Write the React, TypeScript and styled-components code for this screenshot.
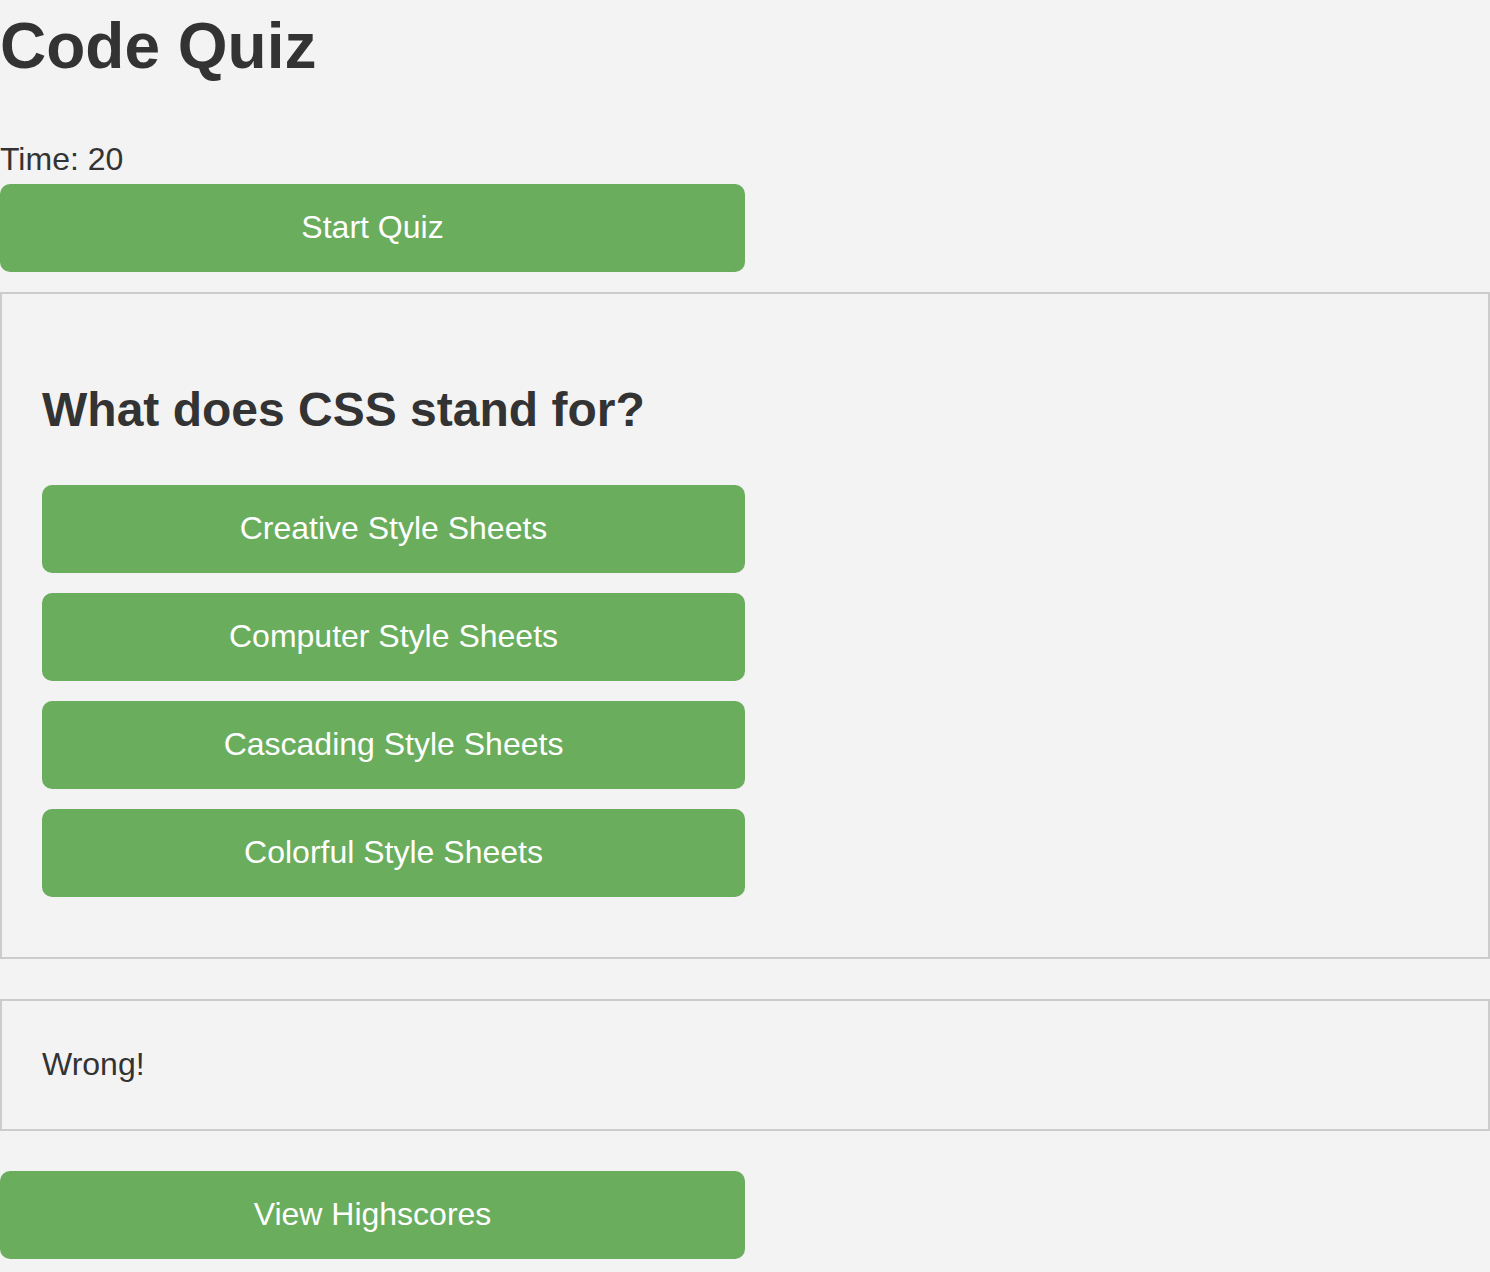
import { createGlobalStyle } from "styled-components";
import styled from "styled-components";

const GlobalStyle = createGlobalStyle`
  html, body {
    margin: 0;
    padding: 0;
    background: #f3f3f3;
  }
  body {
    font-family: "Liberation Sans", Arial, Helvetica, sans-serif;
    font-size: 32px;
    line-height: 1.5;
    color: #333333;
  }
`;

const Page = styled.main`
  display: block;
`;

const Title = styled.h1`
  font-size: 64px;
  font-weight: 700;
  line-height: 1.44;
  margin: 0 0 44px;
`;

const Timer = styled.p`
  margin: -1px 0 1px;
`;

const Button = styled.button`
  display: block;
  width: 50%;
  margin: 0 0 20px;
  padding: 19px 20px 21px;
  border: none;
  border-radius: 10px;
  background: #6aad5d;
  color: #ffffff;
  font-family: inherit;
  font-size: 32px;
  line-height: 1.5;
  text-align: center;
  cursor: pointer;
`;

const Panel = styled.section`
  border: 2px solid #cccccc;
  padding: 40px;
  margin-bottom: 40px;
`;

const Question = styled.h2`
  font-size: 48px;
  font-weight: 700;
  margin: 39.5px 0 39px;
`;

const Feedback = styled.p`
  margin: -1px 0 1px;
`;

const choices = [
  "Creative Style Sheets",
  "Computer Style Sheets",
  "Cascading Style Sheets",
  "Colorful Style Sheets",
];

export default function App() {
  return (
    <Page>
      <GlobalStyle />
      <Title>Code Quiz</Title>
      <Timer>Time: 20</Timer>
      <Button>Start Quiz</Button>
      <Panel>
        <Question>What does CSS stand for?</Question>
        {choices.map((choice) => (
          <Button key={choice}>{choice}</Button>
        ))}
      </Panel>
      <Panel>
        <Feedback>Wrong!</Feedback>
      </Panel>
      <Button>View Highscores</Button>
    </Page>
  );
}
